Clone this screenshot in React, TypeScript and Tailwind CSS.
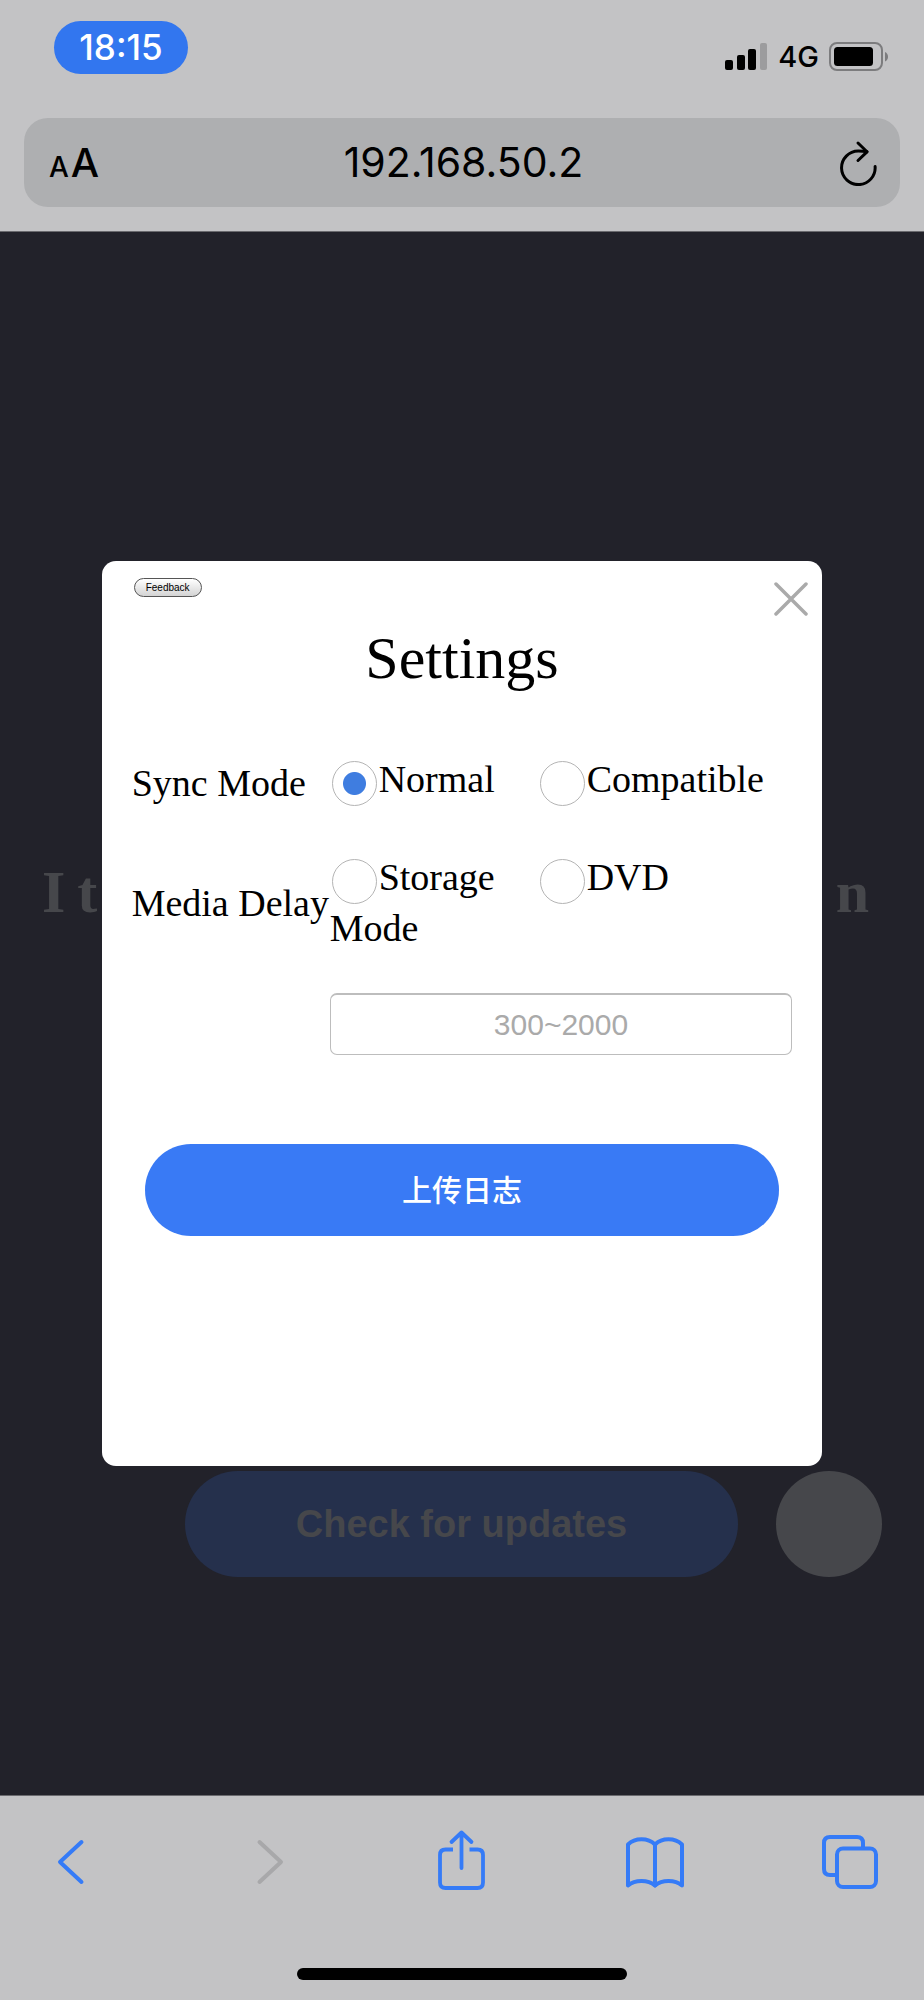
import React, { useState } from 'react';

type RadioOptionProps = {
  name: string;
  label: string;
  checked: boolean;
  onSelect: () => void;
};

const RadioOption: React.FC<RadioOptionProps> = ({ name, label, checked, onSelect }) => (
  <label className="block self-start">
    <input
      type="radio"
      name={name}
      checked={checked}
      onChange={onSelect}
      className="mx-0.5 -my-0.5 inline-block size-[45px] appearance-none rounded-full border border-[#b4b4b4] bg-white align-middle checked:bg-[radial-gradient(circle,#3f7de0_11px,white_12px)]"
    />
    {label}
  </label>
);

const StatusBar: React.FC = () => (
  <div className="flex h-[118px] items-start justify-between pt-[21px] pr-[35px] pl-[54px]">
    <div className="flex h-[53px] w-[134px] items-center justify-center rounded-full bg-[#3276ef] text-[35px] font-medium text-white">
      18:15
    </div>
    <div className="mt-[21px] flex items-center">
      <svg width="43" height="29" viewBox="0 0 43 29">
        <rect x="0" y="18" width="8" height="10" rx="2" />
        <rect x="12" y="13" width="8" height="15" rx="2" />
        <rect x="23" y="7" width="8" height="21" rx="2" />
        <rect x="35" y="1" width="7" height="27" rx="2" fill="#9c9c9e" />
      </svg>
      <span className="ml-[10px] text-[29px] leading-[29px] font-medium">4G</span>
      <svg className="ml-[10px]" width="60" height="29" viewBox="0 0 60 29">
        <rect x="1" y="1" width="52" height="27" rx="7" fill="none" stroke="#7c7c7e" strokeWidth="2" />
        <rect x="5" y="5" width="39" height="19" rx="3.5" />
        <path d="M56 10c4 1.500 4 8 0 9.500z" fill="#7c7c7e" />
      </svg>
    </div>
  </div>
);

const AddressBar: React.FC = () => (
  <div className="mx-6 flex h-[89px] items-center justify-between rounded-[24px] bg-[#aeafb1] pr-[22px] pl-[25px]">
    <button type="button" aria-label="Text size" className="flex w-14 items-baseline font-medium">
      <span className="text-[28px]">A</span>
      <span className="ml-0.5 text-[40px]">A</span>
    </button>
    <span className="text-[41px]">192.168.50.2</span>
    <button type="button" aria-label="Reload" className="flex w-14 justify-end">
      <svg width="40" height="46" viewBox="0 0 40 46" fill="none" stroke="black" strokeWidth="3" strokeLinecap="round" strokeLinejoin="round">
        <path d="M20 3L29 11.800L20 20.500" />
        <path d="M29 11.800C26 11.200 23 11 20.300 11A16.800 16.800 0 1 0 37.100 26.500" />
      </svg>
    </button>
  </div>
);

const SettingsDialog: React.FC = () => {
  const [syncMode, setSyncMode] = useState('normal');
  const [media, setMedia] = useState('');
  const [delay, setDelay] = useState('');

  return (
    <div
      role="dialog"
      aria-labelledby="settings-title"
      className="w-[78%] rounded-[14px] bg-white pb-[230px] font-['Liberation_Serif',serif] text-black"
    >
      <div className="flex items-start justify-between pt-[17px] pr-[14px] pl-8">
        <button
          type="button"
          className="h-[19px] w-[68px] rounded-full border border-[#555] bg-linear-to-b from-white to-[#d4d4d4] font-['Liberation_Sans',sans-serif] text-[10px] leading-[17px]"
        >
          Feedback
        </button>
        <button type="button" aria-label="Close" className="mt-1">
          <svg width="34" height="34" viewBox="0 0 34 34" stroke="#aaaaaa" strokeWidth="3.500" strokeLinecap="round">
            <path d="M2 2L32 32M32 2L2 32" />
          </svg>
        </button>
      </div>

      <h2 id="settings-title" className="mt-1.5 text-center text-[60px] leading-[72px]">
        Settings
      </h2>

      <div className="mt-[60px] grid grid-cols-[198px_208px_1fr] gap-y-[39px] pr-[30px] pl-[30px] text-[38px] leading-[51px]">
        <div role="radiogroup" aria-label="Sync Mode" className="col-span-3 grid min-h-[59px] grid-cols-subgrid">
          <span className="self-center whitespace-nowrap">Sync Mode</span>
          <RadioOption name="sync" label="Normal" checked={syncMode === 'normal'} onSelect={() => setSyncMode('normal')} />
          <RadioOption name="sync" label="Compatible" checked={syncMode === 'compatible'} onSelect={() => setSyncMode('compatible')} />
        </div>
        <div role="radiogroup" aria-label="Media Delay" className="col-span-3 grid grid-cols-subgrid">
          <span className="self-center whitespace-nowrap">Media Delay</span>
          <RadioOption name="media" label="Storage Mode" checked={media === 'storage'} onSelect={() => setMedia('storage')} />
          <RadioOption name="media" label="DVD" checked={media === 'dvd'} onSelect={() => setMedia('dvd')} />
        </div>
        <input
          type="text"
          aria-label="Media delay in milliseconds"
          placeholder="300~2000"
          value={delay}
          onChange={(e) => setDelay(e.target.value)}
          className="col-span-2 col-start-2 h-[62px] rounded-[7px] border border-t-2 border-[#bdbdbd] text-center font-['Liberation_Sans',sans-serif] text-[30px] placeholder:text-[#aaaaaa]"
        />
      </div>

      <div className="mt-[89px] pr-[43px] pl-[43px]">
        <button
          type="button"
          className="h-[92px] w-full rounded-full bg-[#397af5] font-['Liberation_Sans','Noto_Sans_CJK_SC',sans-serif] text-[30px] font-medium text-white"
        >
          上传日志
        </button>
      </div>
    </div>
  );
};

const Toolbar: React.FC = () => (
  <footer className="h-[205px] border-t border-[#6a6a6e] bg-[#c3c3c5]">
    <nav className="flex justify-between pt-[33px] pr-[46px] pl-[42px] text-[#357bf7]">
      <button type="button" aria-label="Back">
        <svg width="56" height="64" viewBox="0 0 56 64" fill="none" stroke="currentColor" strokeWidth="4" strokeLinecap="round" strokeLinejoin="round">
          <path d="M39.500 13L18 33L39.500 53" />
        </svg>
      </button>
      <button type="button" aria-label="Forward" disabled>
        <svg width="56" height="64" viewBox="0 0 56 64" fill="none" stroke="#a8a8aa" strokeWidth="4" strokeLinecap="round" strokeLinejoin="round">
          <path d="M22.500 13L44 33L22.500 53" />
        </svg>
      </button>
      <button type="button" aria-label="Share">
        <svg width="56" height="64" viewBox="0 0 56 64" fill="none" stroke="currentColor" strokeWidth="3.800" strokeLinejoin="round">
          <path d="M22 20.500H14.500Q9 20.500 9 26V53.500Q9 59 14.500 59H46.500Q52 59 52 53.500V26Q52 20.500 46.500 20.500H38.500" />
          <path d="M30.500 39V3.500M20.500 13L30.500 3.500L40.500 13" strokeLinecap="round" />
        </svg>
      </button>
      <button type="button" aria-label="Bookmarks">
        <svg width="58" height="64" viewBox="0 0 58 64" fill="none" stroke="currentColor" strokeWidth="4" strokeLinecap="round" strokeLinejoin="round">
          <path d="M2 56.500V15.500C9 8.500 22 8.500 29 15.500C36 8.500 49 8.500 56 15.500V56.500C49 50.500 36 50.500 29 56.500C22 50.500 9 50.500 2 56.500Z" />
          <path d="M29 15.500V56.500" />
        </svg>
      </button>
      <button type="button" aria-label="Tabs">
        <svg width="56" height="64" viewBox="0 0 56 64" fill="none" stroke="currentColor" strokeWidth="4">
          <path d="M15 46H8Q2 46 2 40V14Q2 8 8 8H35Q41 8 41 14V19.500" />
          <rect x="15" y="19.500" width="39" height="38.500" rx="6" />
        </svg>
      </button>
    </nav>
    <div className="mx-auto mt-[75px] h-3 w-[330px] rounded-full bg-black" />
  </footer>
);

export default function App() {
  return (
    <div className="flex min-h-screen flex-col bg-[#22222a] font-['Inter',sans-serif] text-black">
      <header className="h-[232px] border-b border-[#6a6a6e] bg-[#c3c3c5]">
        <StatusBar />
        <AddressBar />
      </header>

      <main className="relative flex-1">
        {/* Page under the dialog */}
        <div className="pt-[624px] text-[#46474b]">
          <h1 className="flex justify-between pr-[55px] pl-[42px] font-['Liberation_Serif',serif] text-[60px] leading-[72px] font-bold">
            <span className="flex gap-3">
              <span>I</span>
              <span>t</span>
            </span>
            <span>n</span>
          </h1>
          <div className="mt-[543px] flex gap-[38px] pr-[42px] pl-[185px]">
            <button
              type="button"
              className="h-[106px] flex-1 rounded-full bg-[#25304c] font-['Liberation_Sans',sans-serif] text-[38px] font-bold"
            >
              Check for updates
            </button>
            <button type="button" aria-label="Settings" className="size-[106px] rounded-full bg-[#46474b]" />
          </div>
        </div>

        <div className="absolute inset-0 flex items-center justify-center">
          <SettingsDialog />
        </div>
      </main>

      <Toolbar />
    </div>
  );
}
